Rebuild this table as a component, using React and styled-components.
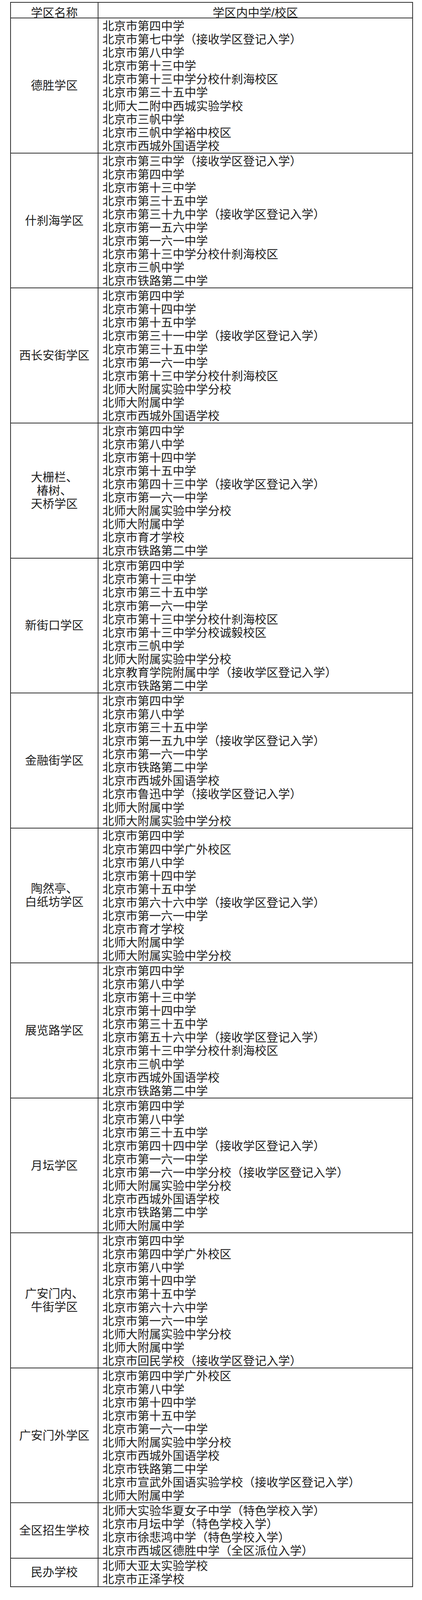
import React from 'react';
import styled, { createGlobalStyle } from 'styled-components';

// the table runs the full height of the 5865px design; vertical sizes are
// in vh so it fills the window height even when the browser clamps it
const h = (px) => `${(px / 58.65).toFixed(4)}vh`

const GlobalStyle = createGlobalStyle`
  html, body {
    margin: 0;
    background: #ffffff;
  }
  body {
    font-family: "Liberation Sans", "Noto Sans CJK SC", sans-serif;
    color: #1e1e1e;
  }
`

const Page = styled.div`
  width: 100%;
  padding-top: ${h(7)};
  box-sizing: border-box;
`

const Table = styled.div`
  width: 1031px;
  margin-left: 26px;
  border: 2px solid #2e2e2e;
  box-sizing: border-box;
  font-size: 30px;
`

const Row = styled.div`
  display: grid;
  grid-template-columns: 224px 1fr;
  border-top: ${(p) => (p.$first ? 'none' : '2px solid #2e2e2e')};
`

const HeadCell = styled.div`
  height: ${h(55)};
  padding-top: ${h(10)};
  box-sizing: border-box;
  display: flex;
  align-items: center;
  justify-content: center;
  border-right: ${(p) => (p.$left ? '2px solid #2e2e2e' : 'none')};
`

const NameCell = styled.div`
  display: flex;
  align-items: center;
  justify-content: center;
  text-align: center;
  white-space: pre-line;
  line-height: ${h(48.8)};
  border-right: 2px solid #2e2e2e;
`

const SchoolList = styled.div`
  padding: ${h(4)} 0 0 10px;
  line-height: ${h(48.8)};
`

const School = styled.div`
  white-space: nowrap;
`

const districts = [
  {
    name: '德胜学区',
    schools: [
      '北京市第四中学',
      '北京市第七中学（接收学区登记入学）',
      '北京市第八中学',
      '北京市第十三中学',
      '北京市第十三中学分校什刹海校区',
      '北京市第三十五中学',
      '北师大二附中西城实验学校',
      '北京市三帆中学',
      '北京市三帆中学裕中校区',
      '北京市西城外国语学校',
    ],
  },
  {
    name: '什刹海学区',
    schools: [
      '北京市第三中学（接收学区登记入学）',
      '北京市第四中学',
      '北京市第十三中学',
      '北京市第三十五中学',
      '北京市第三十九中学（接收学区登记入学）',
      '北京市第一五六中学',
      '北京市第一六一中学',
      '北京市第十三中学分校什刹海校区',
      '北京市三帆中学',
      '北京市铁路第二中学',
    ],
  },
  {
    name: '西长安街学区',
    schools: [
      '北京市第四中学',
      '北京市第十四中学',
      '北京市第十五中学',
      '北京市第三十一中学（接收学区登记入学）',
      '北京市第三十五中学',
      '北京市第一六一中学',
      '北京市第十三中学分校什刹海校区',
      '北师大附属实验中学分校',
      '北师大附属中学',
      '北京市西城外国语学校',
    ],
  },
  {
    name: '大栅栏、\n椿树、\n天桥学区',
    schools: [
      '北京市第四中学',
      '北京市第八中学',
      '北京市第十四中学',
      '北京市第十五中学',
      '北京市第四十三中学（接收学区登记入学）',
      '北京市第一六一中学',
      '北师大附属实验中学分校',
      '北师大附属中学',
      '北京市育才学校',
      '北京市铁路第二中学',
    ],
  },
  {
    name: '新街口学区',
    schools: [
      '北京市第四中学',
      '北京市第十三中学',
      '北京市第三十五中学',
      '北京市第一六一中学',
      '北京市第十三中学分校什刹海校区',
      '北京市第十三中学分校诚毅校区',
      '北京市三帆中学',
      '北师大附属实验中学分校',
      '北京教育学院附属中学（接收学区登记入学）',
      '北京市铁路第二中学',
    ],
  },
  {
    name: '金融街学区',
    schools: [
      '北京市第四中学',
      '北京市第八中学',
      '北京市第三十五中学',
      '北京市第一五九中学（接收学区登记入学）',
      '北京市第一六一中学',
      '北京市铁路第二中学',
      '北京市西城外国语学校',
      '北京市鲁迅中学（接收学区登记入学）',
      '北师大附属中学',
      '北师大附属实验中学分校',
    ],
  },
  {
    name: '陶然亭、\n白纸坊学区',
    schools: [
      '北京市第四中学',
      '北京市第四中学广外校区',
      '北京市第八中学',
      '北京市第十四中学',
      '北京市第十五中学',
      '北京市第六十六中学（接收学区登记入学）',
      '北京市第一六一中学',
      '北京市育才学校',
      '北师大附属中学',
      '北师大附属实验中学分校',
    ],
  },
  {
    name: '展览路学区',
    schools: [
      '北京市第四中学',
      '北京市第八中学',
      '北京市第十三中学',
      '北京市第十四中学',
      '北京市第三十五中学',
      '北京市第五十六中学（接收学区登记入学）',
      '北京市第十三中学分校什刹海校区',
      '北京市三帆中学',
      '北京市西城外国语学校',
      '北京市铁路第二中学',
    ],
  },
  {
    name: '月坛学区',
    schools: [
      '北京市第四中学',
      '北京市第八中学',
      '北京市第三十五中学',
      '北京市第四十四中学（接收学区登记入学）',
      '北京市第一六一中学',
      '北京市第一六一中学分校（接收学区登记入学）',
      '北师大附属实验中学分校',
      '北京市西城外国语学校',
      '北京市铁路第二中学',
      '北师大附属中学',
    ],
  },
  {
    name: '广安门内、\n牛街学区',
    schools: [
      '北京市第四中学',
      '北京市第四中学广外校区',
      '北京市第八中学',
      '北京市第十四中学',
      '北京市第十五中学',
      '北京市第六十六中学',
      '北京市第一六一中学',
      '北师大附属实验中学分校',
      '北师大附属中学',
      '北京市回民学校（接收学区登记入学）',
    ],
  },
  {
    name: '广安门外学区',
    schools: [
      '北京市第四中学广外校区',
      '北京市第八中学',
      '北京市第十四中学',
      '北京市第十五中学',
      '北京市第一六一中学',
      '北师大附属实验中学分校',
      '北京市西城外国语学校',
      '北京市铁路第二中学',
      '北京市宣武外国语实验学校（接收学区登记入学）',
      '北师大附属中学',
    ],
  },
  {
    name: '全区招生学校',
    schools: [
      '北师大实验华夏女子中学（特色学校入学）',
      '北京市月坛中学（特色学校入学）',
      '北京市徐悲鸿中学（特色学校入学）',
      '北京市西城区德胜中学（全区派位入学）',
    ],
  },
  {
    name: '民办学校',
    schools: ['北师大亚太实验学校', '北京市正泽学校'],
  },
]

function App() {
  return (
    <Page>
      <GlobalStyle />
      <Table>
        <Row $first>
          <HeadCell $left>学区名称</HeadCell>
          <HeadCell>学区内中学/校区</HeadCell>
        </Row>
        {districts.map((d) => (
          <Row key={d.name}>
            <NameCell>{d.name}</NameCell>
            <SchoolList>
              {d.schools.map((s, i) => (
                <School key={i}>{s}</School>
              ))}
            </SchoolList>
          </Row>
        ))}
      </Table>
    </Page>
  )
}

export default App
